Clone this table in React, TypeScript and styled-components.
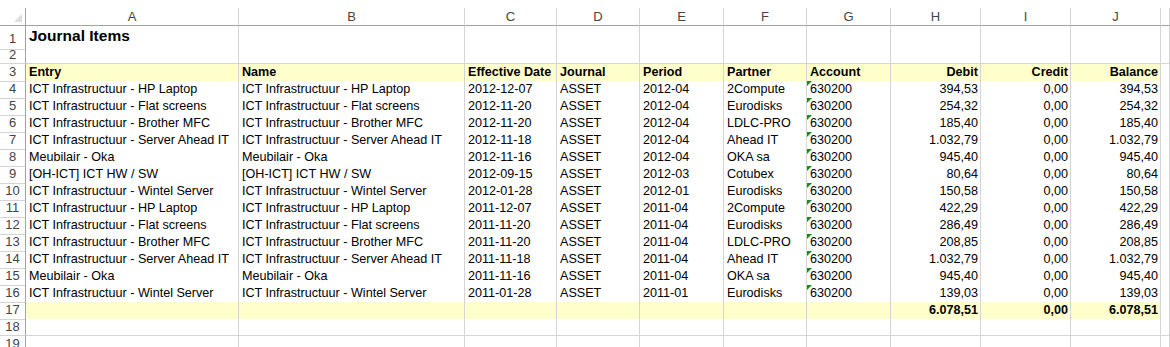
import React from "react";
import styled, { createGlobalStyle, css } from "styled-components";

const Global = createGlobalStyle`
  html, body { margin: 0; padding: 0; background: #fff; }
  body { font-family: "Liberation Sans", Arial, sans-serif; overflow: hidden; }
`;

const COLS = "26px 213px 226px 92px 83px 84px 83px 84px 90px 90px 90px 1fr";
const GRID = "#d4d4d4";
const HDR_LINE = "#a3a3a3";
const YELLOW = "#ffffcc";

const Sheet = styled.div`
  width: 1170px;
  height: 347px;
  padding-top: 8px;
  box-sizing: border-box;
  overflow: hidden;
  background: #fff;
`;

const Row = styled.div<{ $h?: number }>`
  display: grid;
  grid-template-columns: ${COLS};
  height: ${(p) => p.$h ?? 17}px;
`;

const ColHead = styled.div<{ $corner?: boolean }>`
  box-sizing: border-box;
  border-right: 1px solid ${(p) => (p.$corner ? HDR_LINE : GRID)};
  border-bottom: 1px solid ${HDR_LINE};
  color: #444;
  font-size: 13px;
  line-height: 17px;
  text-align: center;
  position: relative;
`;

const CornerMark = styled.span`
  position: absolute;
  right: 3px;
  bottom: 3px;
  width: 0;
  height: 0;
  border-left: 8px solid transparent;
  border-bottom: 8px solid #dcdcdc;
`;

const RowHead = styled.div<{ $h?: number }>`
  box-sizing: border-box;
  border-right: 1px solid ${HDR_LINE};
  border-bottom: 1px solid ${GRID};
  color: #444;
  font-size: 13px;
  line-height: ${(p) => (p.$h ?? 17) - 1}px;
  text-align: center;
  padding-top: ${(p) => ((p.$h ?? 17) > 17 ? 3 : 0)}px;
`;

const Cell = styled.div<{
  $yellow?: boolean;
  $bold?: boolean;
  $right?: boolean;
  $title?: boolean;
  $strong?: boolean;
}>`
  box-sizing: border-box;
  position: relative;
  border-right: 1px solid ${GRID};
  border-bottom: 1px solid ${(p) => (p.$strong ? HDR_LINE : GRID)};
  background: ${(p) => (p.$yellow ? YELLOW : "#fff")};
  color: #000;
  font-size: 12.6px;
  line-height: 17px;
  font-weight: ${(p) => (p.$bold ? 700 : 400)};
  text-align: ${(p) => (p.$right ? "right" : "left")};
  padding: 0 2px 0 3px;
  white-space: nowrap;
  overflow: visible;
  ${(p) =>
    p.$title &&
    css`
      font-size: 15.5px;
      line-height: 20px;
    `}
`;

const Flag = styled.span`
  position: absolute;
  left: 0;
  top: 0;
  width: 0;
  height: 0;
  border-top: 5px solid #1e8a1e;
  border-right: 5px solid transparent;
`;

type Entry = {
  entry: string;
  date: string;
  period: string;
  partner: string;
  debit: string;
};

const data: Entry[] = [
  { entry: "ICT Infrastructuur - HP Laptop", date: "2012-12-07", period: "2012-04", partner: "2Compute", debit: "394,53" },
  { entry: "ICT Infrastructuur - Flat screens", date: "2012-11-20", period: "2012-04", partner: "Eurodisks", debit: "254,32" },
  { entry: "ICT Infrastructuur - Brother MFC", date: "2012-11-20", period: "2012-04", partner: "LDLC-PRO", debit: "185,40" },
  { entry: "ICT Infrastructuur - Server Ahead IT", date: "2012-11-18", period: "2012-04", partner: "Ahead IT", debit: "1.032,79" },
  { entry: "Meubilair - Oka", date: "2012-11-16", period: "2012-04", partner: "OKA sa", debit: "945,40" },
  { entry: "[OH-ICT] ICT HW / SW", date: "2012-09-15", period: "2012-03", partner: "Cotubex", debit: "80,64" },
  { entry: "ICT Infrastructuur - Wintel Server", date: "2012-01-28", period: "2012-01", partner: "Eurodisks", debit: "150,58" },
  { entry: "ICT Infrastructuur - HP Laptop", date: "2011-12-07", period: "2011-04", partner: "2Compute", debit: "422,29" },
  { entry: "ICT Infrastructuur - Flat screens", date: "2011-11-20", period: "2011-04", partner: "Eurodisks", debit: "286,49" },
  { entry: "ICT Infrastructuur - Brother MFC", date: "2011-11-20", period: "2011-04", partner: "LDLC-PRO", debit: "208,85" },
  { entry: "ICT Infrastructuur - Server Ahead IT", date: "2011-11-18", period: "2011-04", partner: "Ahead IT", debit: "1.032,79" },
  { entry: "Meubilair - Oka", date: "2011-11-16", period: "2011-04", partner: "OKA sa", debit: "945,40" },
  { entry: "ICT Infrastructuur - Wintel Server", date: "2011-01-28", period: "2011-01", partner: "Eurodisks", debit: "139,03" },
];

const letters = ["A", "B", "C", "D", "E", "F", "G", "H", "I", "J", ""];

const EmptyRow: React.FC<{ n: number; yellow?: boolean; h?: number; strong?: boolean }> = ({
  n,
  yellow,
  h,
  strong,
}) => (
  <Row $h={h}>
    <RowHead $h={h}>{n}</RowHead>
    {letters.map((l, i) => (
      <Cell key={i} $yellow={yellow && i < 10} $strong={strong && i < 10} />
    ))}
  </Row>
);

export default function App() {
  const headers = [
    "Entry",
    "Name",
    "Effective Date",
    "Journal",
    "Period",
    "Partner",
    "Account",
    "Debit",
    "Credit",
    "Balance",
  ];
  const rightCols = new Set([7, 8, 9]);
  return (
    <>
      <Global />
      <Sheet>
        <Row $h={18}>
          <ColHead $corner>
            <CornerMark />
          </ColHead>
          {letters.map((l, i) => (
            <ColHead key={i}>{l}</ColHead>
          ))}
        </Row>

        <Row $h={21}>
          <RowHead $h={21}>1</RowHead>
          <Cell $title $bold>
            Journal Items
          </Cell>
          {letters.slice(1).map((_, i) => (
            <Cell key={i} />
          ))}
        </Row>

        <EmptyRow n={2} />

        <Row>
          <RowHead>3</RowHead>
          {headers.map((h, i) => (
            <Cell key={h} $yellow $bold $strong $right={rightCols.has(i)}>
              {h}
            </Cell>
          ))}
          <Cell $strong />
        </Row>

        {data.map((d, idx) => (
          <Row key={idx}>
            <RowHead>{idx + 4}</RowHead>
            <Cell>{d.entry}</Cell>
            <Cell>{d.entry}</Cell>
            <Cell>{d.date}</Cell>
            <Cell>ASSET</Cell>
            <Cell>{d.period}</Cell>
            <Cell>{d.partner}</Cell>
            <Cell>
              <Flag />
              630200
            </Cell>
            <Cell $right>{d.debit}</Cell>
            <Cell $right>0,00</Cell>
            <Cell $right>{d.debit}</Cell>
            <Cell />
          </Row>
        ))}

        <Row>
          <RowHead>17</RowHead>
          {Array.from({ length: 7 }).map((_, i) => (
            <Cell key={i} $yellow />
          ))}
          <Cell $yellow $bold $right>
            6.078,51
          </Cell>
          <Cell $yellow $bold $right>
            0,00
          </Cell>
          <Cell $yellow $bold $right>
            6.078,51
          </Cell>
          <Cell />
        </Row>

        <EmptyRow n={18} />
        <EmptyRow n={19} />
      </Sheet>
    </>
  );
}
